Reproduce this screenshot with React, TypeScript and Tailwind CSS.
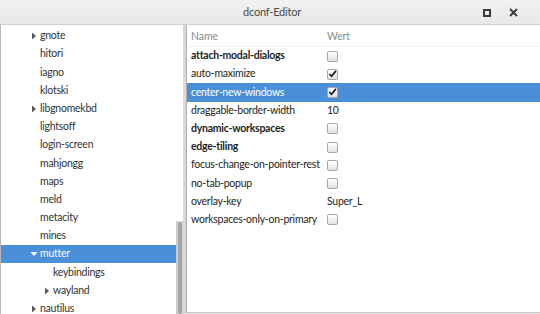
import React from "react";

type TreeItem = { label: string; arrow?: "right" | "down"; indent?: number; selected?: boolean };

const tree: TreeItem[] = [
  { label: "gnote", arrow: "right" },
  { label: "hitori" },
  { label: "iagno" },
  { label: "klotski" },
  { label: "libgnomekbd", arrow: "right" },
  { label: "lightsoff" },
  { label: "login-screen" },
  { label: "mahjongg" },
  { label: "maps" },
  { label: "meld" },
  { label: "metacity" },
  { label: "mines" },
  { label: "mutter", arrow: "down", selected: true },
  { label: "keybindings", indent: 1 },
  { label: "wayland", arrow: "right", indent: 1 },
  { label: "nautilus", arrow: "right" },
];

type Row = { name: string; bold?: boolean; value: "off" | "on" | string; selected?: boolean };

const rows: Row[] = [
  { name: "attach-modal-dialogs", bold: true, value: "off" },
  { name: "auto-maximize", value: "on" },
  { name: "center-new-windows", value: "on", selected: true },
  { name: "draggable-border-width", value: "10" },
  { name: "dynamic-workspaces", bold: true, value: "off" },
  { name: "edge-tiling", bold: true, value: "off" },
  { name: "focus-change-on-pointer-rest", value: "off" },
  { name: "no-tab-popup", value: "off" },
  { name: "overlay-key", value: "Super_L" },
  { name: "workspaces-only-on-primary", value: "off" },
];

function Arrow({ dir, white }: { dir: "right" | "down"; white?: boolean }) {
  const fill = white ? "#ffffff" : "#5a5a5a";
  return (
    <svg width="8" height="8" viewBox="0 0 8 8">
      {dir === "right" ? (
        <path d="M2 0.5 L6 4 L2 7.5 Z" fill={fill} />
      ) : (
        <path d="M0.5 2 L7.5 2 L4 6 Z" fill={fill} />
      )}
    </svg>
  );
}

function Check({ checked }: { checked: boolean }) {
  return (
    <div className="w-[11px] h-[11px] rounded-[2px] border border-[#a8a8a8] bg-gradient-to-b from-[#ffffff] to-[#e2e2e2] flex items-center justify-center">
      {checked && (
        <svg width="10" height="10" viewBox="0 0 10 10" className="-mt-[1px]">
          <path d="M1.5 5 L4 7.5 L8.8 1.5" stroke="#1a1a1a" strokeWidth="1.9" fill="none" />
        </svg>
      )}
    </div>
  );
}

export default function App() {
  return (
    <div
      className="w-[540px] h-[314px] bg-[#e6e6e5] flex flex-col overflow-hidden text-[#2e3436]"
      style={{ fontFamily: 'Lato, "Noto Sans", sans-serif' }}
    >
      {/* Title bar */}
      <div className="h-[25px] shrink-0 bg-gradient-to-b from-[#f1f1f1] to-[#e8e8e8] border-b border-[#cfcfcf] flex items-center relative">
        <div className="flex-1 text-center text-[11px] tracking-[-0.2px] text-[#4a4a4a] pl-[4px]">dconf-Editor</div>
        <div className="absolute right-[22px] top-[8px] flex items-center gap-[18px]">
          <div className="w-[8px] h-[8px] border-[2px] border-[#3a3a3a]" />
          <svg width="9" height="9" viewBox="0 0 9 9">
            <path d="M1 1 L8 8 M8 1 L1 8" stroke="#3a3a3a" strokeWidth="1.8" />
          </svg>
        </div>
      </div>

      {/* Body */}
      <div className="flex-1 flex min-h-0">
        {/* Left pane */}
        <div className="w-[183px] shrink-0 flex bg-white border-l border-[#b8b8b8] overflow-hidden">
          <div className="flex-1 flex flex-col pt-[2px]">
            {tree.map((t) => (
              <div
                key={t.label}
                className={`h-[18.2px] shrink-0 flex items-center text-[10.5px] tracking-[-0.25px] ${
                  t.selected ? "bg-[#4a90d9] text-white" : "text-[#2e3436]"
                } ${t.indent ? "pl-[42px]" : "pl-[29px]"}`}
              >
                <div className="w-[10px] flex items-center">
                  {t.arrow && <Arrow dir={t.arrow} white={t.selected} />}
                </div>
                <span>{t.label}</span>
              </div>
            ))}
          </div>
          <div className="w-[7px] shrink-0 flex flex-col">
            <div className="h-[196px]" />
            <div className="flex-1 bg-[#d6d6d6] border-l border-[#c8c8c8] flex justify-center pt-[1px]">
              <div className="w-[4px] h-full bg-[#a4a4a4] rounded-[2px]" />
            </div>
          </div>
        </div>

        {/* Pane separator */}
        <div className="w-[3px] shrink-0 bg-[#d8d8d8]" />

        {/* Right pane */}
        <div className="flex-1 flex flex-col bg-white border-l border-[#b0b0b0] border-b border-b-[#c8c8c8] mb-[1px]">
          <div className="h-[22px] shrink-0 flex items-center pt-[2px] text-[10.5px] tracking-[-0.1px] text-[#8a8a8a] border-b border-[#f0f0f0]">
            <div className="w-[140px] pl-[4px]">Name</div>
            <div>Wert</div>
          </div>
          {rows.map((r) => (
            <div
              key={r.name}
              className={`h-[18.2px] shrink-0 flex items-center text-[10.5px] tracking-[-0.25px] ${
                r.selected ? "bg-[#4a90d9] text-white" : "text-[#1e1e1e]"
              }`}
            >
              <div className={`w-[140px] pl-[4px] whitespace-nowrap ${r.bold ? "font-bold" : ""}`}>{r.name}</div>
              <div className="flex items-center">
                {r.value === "on" || r.value === "off" ? (
                  <Check checked={r.value === "on"} />
                ) : (
                  <span className={r.selected ? "text-white" : "text-[#1e1e1e]"}>{r.value}</span>
                )}
              </div>
            </div>
          ))}
          <div className="flex-1" />
        </div>
      </div>
    </div>
  );
}
